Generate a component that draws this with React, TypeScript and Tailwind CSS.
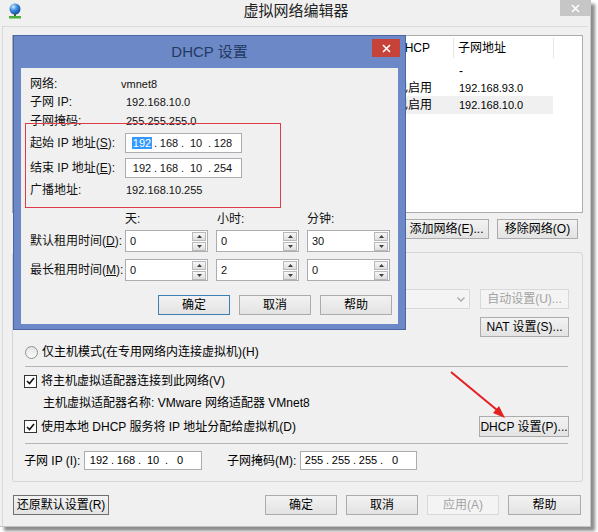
import React from 'react';

type BtnProps = {
  children: React.ReactNode;
  w: string;
  h?: string;
  disabled?: boolean;
  primary?: boolean;
  dark?: boolean;
};

const WinButton: React.FC<BtnProps> = ({ children, w, h = 'h-[20px]', disabled, primary, dark }) => {
  const look = disabled
    ? 'border-[#d9d9d9] bg-[#f4f4f4] text-[#a3a3a3]'
    : primary
    ? 'border-[#3c7fb1] bg-linear-to-b from-[#f2f2f2] to-[#e3e3e3] text-black'
    : dark
    ? 'border-[#707070] bg-linear-to-b from-[#f2f2f2] to-[#e3e3e3] text-black'
    : 'border-[#acacac] bg-linear-to-b from-[#f2f2f2] to-[#e3e3e3] text-black';
  return (
    <div className={`${w} ${h} shrink-0 flex items-center justify-center border text-[12px] leading-none ${look}`}>
      {children}
    </div>
  );
};

const CheckBox = () => (
  <div className="w-[13px] h-[13px] shrink-0 border border-[#333] bg-white flex items-center justify-center">
    <svg width="9" height="8" viewBox="0 0 9 8">
      <path d="M1 4 L3.5 6.5 L8 1" stroke="#111" strokeWidth="1.6" fill="none" />
    </svg>
  </div>
);

const Radio = () => (
  <div className="w-[13px] h-[13px] shrink-0 rounded-full border border-[#8e8f8f] bg-linear-to-b from-[#e4e4e4] to-[#fbfbfb]" />
);

// IP address box: four octets split by dots
const IpBox: React.FC<{ parts: string[]; box: string; highlight?: boolean }> = ({ parts, box, highlight }) => (
  <div className={`flex items-center bg-white border border-[#abadb3] text-[11px] ${box}`}>
    {parts.map((p, i) => (
      <React.Fragment key={i}>
        {i > 0 && <span className="w-[5px] text-center">.</span>}
        <span className="w-[22px] text-center">
          {highlight && i === 0 ? <span className="bg-[#3399ff] text-white px-[1px]">{p}</span> : p}
        </span>
      </React.Fragment>
    ))}
  </div>
);

const Arrow = ({ up }: { up?: boolean }) => (
  <div className="w-[14px] h-[9px] border border-[#b9b9b9] bg-linear-to-b from-[#f7f7f7] to-[#dedede] flex items-center justify-center">
    <svg width="5" height="3" viewBox="0 0 5 3">
      <path d={up ? 'M0 3 L2.5 0 L5 3Z' : 'M0 0 L2.5 3 L5 0Z'} fill="#404040" />
    </svg>
  </div>
);

const Spin = ({ value }: { value: string }) => (
  <div className="w-[83px] h-[22px] flex items-center bg-white border border-[#abadb3] pl-[4px] pr-[1px]">
    <span className="flex-1 text-[11px]">{value}</span>
    <div className="flex flex-col gap-[1px]">
      <Arrow up />
      <Arrow />
    </div>
  </div>
);

const Globe = () => (
  <svg width="14" height="16" viewBox="0 0 14 16">
    <defs>
      <radialGradient id="gl" cx="0.35" cy="0.3" r="0.75">
        <stop offset="0" stopColor="#cfeaff" />
        <stop offset="0.45" stopColor="#3d8fe0" />
        <stop offset="1" stopColor="#17479a" />
      </radialGradient>
    </defs>
    <circle cx="7" cy="6" r="5.5" fill="url(#gl)" />
    <rect x="6" y="11" width="2" height="2" fill="#3b5f3b" />
    <rect x="1" y="13" width="12" height="2.5" fill="#49b03a" />
  </svg>
);

// the first four columns sit under the DHCP dialog, only DHCP / 子网地址 show
const cols = 'grid grid-cols-[70px_90px_140px_78px_62px_100px_1fr]';
const headers = ['', '', '', '', 'DHCP', '子网地址', ''];
const rows = [
  ['', '', '', '', '-', '-'],
  ['', '', '', '', '已启用', '192.168.93.0'],
  ['', '', '', '', '已启用', '192.168.10.0'],
];

const DhcpDialog = () => (
  <div className="absolute left-[13px] top-[35px] w-[393px] h-[295px] bg-[#6d88c6] border border-[#4b66a4] flex flex-col">
    <div className="h-[32px] grid grid-cols-[1fr_auto_1fr] items-center">
      <div />
      <div className="text-[15px] text-[#233a63] pt-[1px]">DHCP 设置</div>
      <div className="flex justify-end self-start">
        <div className="w-[28px] h-[18px] mt-[3px] mr-[5px] bg-[#c7433a] flex items-center justify-center">
          <svg width="9" height="9" viewBox="0 0 9 9">
            <path d="M1 1 L8 8 M8 1 L1 8" stroke="#fff" strokeWidth="1.6" />
          </svg>
        </div>
      </div>
    </div>
    <div className="relative flex-1 mx-[7px] mb-[5px] bg-[#f0f0f0] pl-[9px] pt-[8px] flex flex-col text-[#111]">
      <div className="flex items-center h-[16px]">
        <span className="w-[91px]">网络:</span>
        <span className="text-[11px]">vmnet8</span>
      </div>
      <div className="flex items-center h-[16px] mt-[2px]">
        <span className="w-[96px]">子网 IP:</span>
        <span className="text-[11px]">192.168.10.0</span>
      </div>
      <div className="flex items-center h-[16px] mt-[3px]">
        <span className="w-[96px]">子网掩码:</span>
        <span className="text-[11px]">255.255.255.0</span>
      </div>
      <div className="flex items-center h-[20px] mt-[4px]">
        <span className="w-[95px]">起始 IP 地址(<u>S</u>):</span>
        <IpBox parts={['192', '168', '10', '128']} box="w-[117px] h-[20px] pl-[5px]" highlight />
      </div>
      <div className="flex items-center h-[20px] mt-[5px]">
        <span className="w-[95px]">结束 IP 地址(<u>E</u>):</span>
        <IpBox parts={['192', '168', '10', '254']} box="w-[117px] h-[20px] pl-[5px]" />
      </div>
      <div className="flex items-center h-[16px] mt-[4px]">
        <span className="w-[96px]">广播地址:</span>
        <span className="text-[11px]">192.168.10.255</span>
      </div>
      <div className="flex items-center h-[16px] mt-[13px] pl-[95px] gap-[8px]">
        <span className="w-[83px]">天:</span>
        <span className="w-[83px] pl-[1px]">小时:</span>
        <span className="w-[83px]">分钟:</span>
      </div>
      <div className="flex items-center h-[22px] mt-[3px]">
        <span className="w-[95px]">默认租用时间(<u>D</u>):</span>
        <div className="flex gap-[8px]">
          <Spin value="0" />
          <Spin value="0" />
          <Spin value="30" />
        </div>
      </div>
      <div className="flex items-center h-[22px] mt-[7px]">
        <span className="w-[95px]">最长租用时间(<u>M</u>):</span>
        <div className="flex gap-[8px]">
          <Spin value="0" />
          <Spin value="2" />
          <Spin value="0" />
        </div>
      </div>
      <div className="flex justify-end gap-[9px] pr-[6px] mt-[14px]">
        <WinButton w="w-[72px]" primary>确定</WinButton>
        <WinButton w="w-[72px]">取消</WinButton>
        <WinButton w="w-[72px]">帮助</WinButton>
      </div>
      {/* red annotation box */}
      <div className="absolute left-[4px] top-[55px] w-[256px] h-[85px] border border-[#dc3c46] pointer-events-none" />
    </div>
  </div>
);

export default function App() {
  return (
    <div className="relative w-[598px] h-[532px] bg-white overflow-hidden text-[12px] text-black font-['Liberation_Sans','Noto_Sans_CJK_SC',sans-serif]">
      <div className="w-[591px] h-[527px] bg-[#f0f0f0] border-r border-b border-[#c4c4c4] shadow-[4px_4px_3px_rgba(0,0,0,0.45)] flex flex-col">
        {/* title bar */}
        <div className="h-[26px] shrink-0 flex items-start">
          <div className="w-[32px] pl-[8px] pt-[3px]">
            <Globe />
          </div>
          <div className="flex-1 text-center text-[15px] leading-[20px] pt-[1px] text-[#222]">虚拟网络编辑器</div>
          <div className="w-[30px] h-[16px] bg-[#c6c6c6] flex items-center justify-center">
            <svg width="9" height="9" viewBox="0 0 9 9">
              <path d="M1 1 L8 8 M8 1 L1 8" stroke="#fff" strokeWidth="1.6" />
            </svg>
          </div>
        </div>

        <div className="flex-1 mx-[2px] border-t border-l border-[#dadada] pl-[9px] pr-[5px] pt-[8px] flex flex-col">
          {/* network list */}
          <div className="h-[178px] bg-white border border-[#adadad] flex flex-col">
            <div className={`${cols} h-[24px] items-center`}>
              {headers.map((h, i) => (
                <div key={i} className={`h-[20px] flex items-center pl-[4px] ${i > 0 ? 'border-l border-[#e5e5e5]' : ''}`}>
                  {h}
                </div>
              ))}
            </div>
            <div className="mt-[2px] flex flex-col">
              {rows.map((r, ri) => (
                <div key={ri} className={`${cols} h-[17px]`}>
                  {r.map((c, ci) => (
                    <div
                      key={ci}
                      className={`flex items-center pl-[5px] ${ci === 5 ? 'pl-[6px]' : ''} ${ri === 2 ? 'bg-[#f0f0f0]' : ''} ${/^[\d.]+$/.test(c) ? 'text-[11px]' : ''}`}
                    >
                      {c}
                    </div>
                  ))}
                  <div />
                </div>
              ))}
            </div>
          </div>

          <div className="flex justify-end gap-[8px] pr-[5px] mt-[6px]">
            <WinButton w="w-[85px]">添加网络(E)...</WinButton>
            <WinButton w="w-[81px]">移除网络(O)</WinButton>
          </div>

          {/* VMnet info group (its upper rows sit under the DHCP dialog) */}
          <div className="mt-[13px] border border-[#d5d5d5] rounded-[3px] pl-[11px] pr-[13px] pt-[9px] pb-[11px] flex flex-col">
            <div className="flex items-center gap-[4px] h-[20px]">
              <Radio />
            </div>
            <div className="flex items-center h-[20px] mt-[7px] pl-[97px]">
              <div className="flex-1 h-[20px] border border-[#d9d9d9] bg-[#f4f4f4] flex items-center justify-end pr-[4px]">
                <svg width="8" height="5" viewBox="0 0 8 5">
                  <path d="M0.5 0.5 L4 4 L7.5 0.5" stroke="#a8a8a8" strokeWidth="1.3" fill="none" />
                </svg>
              </div>
              <div className="ml-[10px]">
                <WinButton w="w-[89px]" disabled>自动设置(U)...</WinButton>
              </div>
            </div>
            <div className="flex items-start h-[20px] mt-[8px]">
              <div className="flex-1 flex items-center h-[14px] -mt-[4px]">
                <Radio />
              </div>
              <WinButton w="w-[89px]">NAT 设置(S)...</WinButton>
            </div>
            <div className="flex items-center gap-[4px] h-[18px] mt-[6px] pl-[1px]">
              <Radio />
              <span>仅主机模式(在专用网络内连接虚拟机)(H)</span>
            </div>
            <div className="mt-[5px] mx-[1px] border-t border-[#b5b5b5]" />
            <div className="flex items-center gap-[4px] h-[16px] mt-[6px]">
              <CheckBox />
              <span>将主机虚拟适配器连接到此网络(V)</span>
            </div>
            <div className="flex items-center h-[16px] mt-[6px] pl-[19px]">
              主机虚拟适配器名称: VMware 网络适配器 VMnet8
            </div>
            <div className="flex items-center h-[21px] mt-[5px]">
              <div className="flex-1 flex items-center gap-[4px]">
                <CheckBox />
                <span>使用本地 DHCP 服务将 IP 地址分配给虚拟机(D)</span>
              </div>
              <WinButton w="w-[90px]" h="h-[21px]">DHCP 设置(P)...</WinButton>
            </div>
            <div className="mt-[6px] mx-[1px] border-t border-[#b5b5b5]" />
            <div className="flex items-center h-[19px] mt-[7px]">
              <span className="w-[60px]">子网 IP (I):</span>
              <IpBox parts={['192', '168', '10', '0']} box="w-[118px] h-[19px] pl-[3px]" />
              <span className="w-[73px] ml-[25px]">子网掩码(M):</span>
              <IpBox parts={['255', '255', '255', '0']} box="w-[117px] h-[19px] pl-[2px]" />
            </div>
          </div>

          {/* bottom buttons */}
          <div className="flex items-center mt-[13px] pl-[1px] pr-[2px]">
            <WinButton w="w-[96px]" dark>还原默认设置(R)</WinButton>
            <div className="flex-1" />
            <div className="flex gap-[9px]">
              <WinButton w="w-[72px]">确定</WinButton>
              <WinButton w="w-[72px]">取消</WinButton>
              <WinButton w="w-[72px]" disabled>应用(A)</WinButton>
              <WinButton w="w-[73px]">帮助</WinButton>
            </div>
          </div>
        </div>
      </div>

      <DhcpDialog />

      {/* red arrow pointing to DHCP button */}
      <svg className="absolute left-0 top-0 pointer-events-none" width="598" height="532">
        <path d="M451 372 L497 410" stroke="#e3201f" strokeWidth="2" />
        <polygon points="505,418 493,413 499,406" fill="#e3201f" />
      </svg>
    </div>
  );
}
